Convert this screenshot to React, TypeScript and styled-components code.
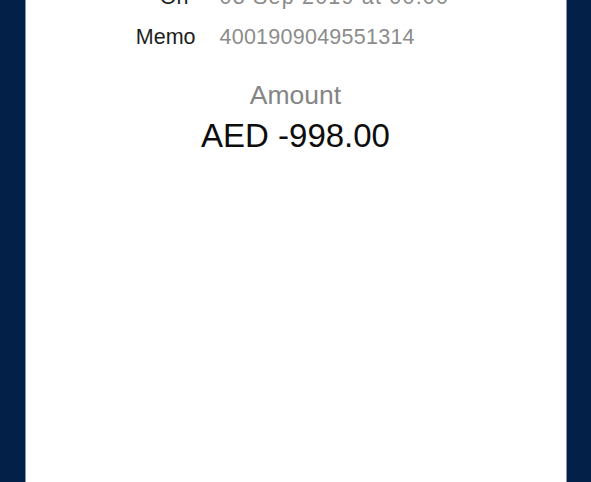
import React from "react";
import styled, { createGlobalStyle } from "styled-components";

const Global = createGlobalStyle`
  html, body { margin: 0; padding: 0; background: #022048; }
  body { font-family: "Liberation Sans", Arial, sans-serif; overflow: hidden; }
`;

const Screen = styled.div`
  display: flex;
  justify-content: center;
  height: 482px;
  background: #022048;
`;

const Sheet = styled.div`
  width: 540px;
  height: 482px;
  background: #ffffff;
  box-shadow: -1px 0 0 #8a96a8, 1px 0 0 #8a96a8;
  overflow: hidden;
  display: flex;
  flex-direction: column;
`;

const Details = styled.div`
  margin-top: -23px;
  padding-left: 90px;
  display: flex;
  flex-direction: column;
`;

const Row = styled.div`
  display: flex;
  align-items: baseline;
  height: 40px;
  line-height: 40px;
`;

const Label = styled.span<{ $trail?: number }>`
  width: 80px;
  box-sizing: border-box;
  padding-right: ${(p) => p.$trail ?? 0}px;
  text-align: right;
  font-size: 21.5px;
  color: #1e1e1e;
`;

const Value = styled.span<{ $spacing?: number }>`
  margin-left: 24px;
  font-size: 21.5px;
  letter-spacing: ${(p) => p.$spacing ?? 0}px;
  color: #8c8c8c;
  white-space: nowrap;
`;

const AmountBlock = styled.div`
  margin-top: 22px;
  display: flex;
  flex-direction: column;
  align-items: center;
`;

const AmountLabel = styled.div`
  font-size: 26.5px;
  line-height: 32px;
  color: #858585;
`;

const AmountValue = styled.div`
  margin-top: 5px;
  font-size: 33px;
  line-height: 40px;
  color: #0d0d0d;
`;

export default function App() {
  return (
    <>
      <Global />
      <Screen>
        <Sheet>
          <Details>
            <Row>
              <Label $trail={7}>On</Label>
              <Value $spacing={1.2}>03 Sep 2019 at 00:00</Value>
            </Row>
            <Row>
              <Label>Memo</Label>
              <Value $spacing={0.25}>4001909049551314</Value>
            </Row>
          </Details>
          <AmountBlock>
            <AmountLabel>Amount</AmountLabel>
            <AmountValue>AED -998.00</AmountValue>
          </AmountBlock>
        </Sheet>
      </Screen>
    </>
  );
}
